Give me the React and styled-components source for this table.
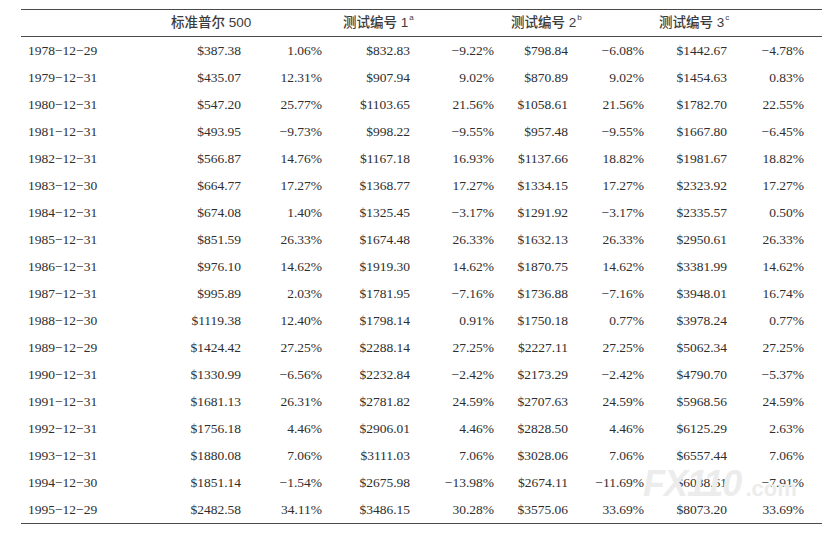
import React from "react";
import styled, { createGlobalStyle } from "styled-components";

const Global = createGlobalStyle`
  html, body { margin: 0; padding: 0; background: #fff; }
  body { width: 832px; height: 541px; overflow: hidden; }
`;

const COLS = "149px 71px 81px 88px 84px 74px 76px 83px 77px";

const Table = styled.div`
  position: relative;
  margin: 9px 0 0 21px;
  width: 801px;
  box-sizing: border-box;
  padding-right: 18px;
  border-top: 1px solid #4a4a4a;
  border-bottom: 1px solid #4a4a4a;
  font-family: "Liberation Serif", "Times New Roman", serif;
  color: #2e2e2e;
`;

const HeaderRow = styled.div`
  display: grid;
  grid-template-columns: ${COLS};
  height: 26px;
  align-items: center;
  border-bottom: 1px solid #4a4a4a;
  margin-right: -18px;
  padding-right: 18px;
`;

const HeadCell = styled.div`
  grid-column: ${(p) => p.$span};
  padding-left: ${(p) => p.$pad}px;
  font-family: "Liberation Sans", "Noto Sans CJK SC", sans-serif;
  font-size: 13.5px;
  font-weight: 500;
  color: #3c3c3c;
  white-space: nowrap;
  line-height: 1;
`;

const Sup = styled.sup`
  font-size: 8px;
  vertical-align: top;
  position: relative;
  top: -2px;
  margin-left: 1px;
`;

const Row = styled.div`
  display: grid;
  grid-template-columns: ${COLS};
  height: 27px;
  align-items: center;
  font-size: 13.5px;
`;

const DateCell = styled.div`
  padding-left: 7px;
  white-space: nowrap;
`;

const Num = styled.div`
  text-align: right;
  white-space: nowrap;
`;

const Watermark = styled.div`
  position: absolute;
  left: 622px;
  top: 456px;
  display: flex;
  align-items: baseline;
  gap: 4px;
  pointer-events: none;
  font-family: "Liberation Sans", sans-serif;
  color: #ececec;
`;

const WmBig = styled.span`
  font-size: 36px;
  font-weight: 700;
  font-style: italic;
  letter-spacing: -1px;
  line-height: 1;
`;

const WmSmall = styled.span`
  font-size: 22px;
  font-weight: 700;
  line-height: 1;
`;

const M = "\u2212";
const d = (s) => s.replace(/-/g, M);

const data = [
  ["1978-12-29", "$387.38", "1.06%", "$832.83", "-9.22%", "$798.84", "-6.08%", "$1442.67", "-4.78%"],
  ["1979-12-31", "$435.07", "12.31%", "$907.94", "9.02%", "$870.89", "9.02%", "$1454.63", "0.83%"],
  ["1980-12-31", "$547.20", "25.77%", "$1103.65", "21.56%", "$1058.61", "21.56%", "$1782.70", "22.55%"],
  ["1981-12-31", "$493.95", "-9.73%", "$998.22", "-9.55%", "$957.48", "-9.55%", "$1667.80", "-6.45%"],
  ["1982-12-31", "$566.87", "14.76%", "$1167.18", "16.93%", "$1137.66", "18.82%", "$1981.67", "18.82%"],
  ["1983-12-30", "$664.77", "17.27%", "$1368.77", "17.27%", "$1334.15", "17.27%", "$2323.92", "17.27%"],
  ["1984-12-31", "$674.08", "1.40%", "$1325.45", "-3.17%", "$1291.92", "-3.17%", "$2335.57", "0.50%"],
  ["1985-12-31", "$851.59", "26.33%", "$1674.48", "26.33%", "$1632.13", "26.33%", "$2950.61", "26.33%"],
  ["1986-12-31", "$976.10", "14.62%", "$1919.30", "14.62%", "$1870.75", "14.62%", "$3381.99", "14.62%"],
  ["1987-12-31", "$995.89", "2.03%", "$1781.95", "-7.16%", "$1736.88", "-7.16%", "$3948.01", "16.74%"],
  ["1988-12-30", "$1119.38", "12.40%", "$1798.14", "0.91%", "$1750.18", "0.77%", "$3978.24", "0.77%"],
  ["1989-12-29", "$1424.42", "27.25%", "$2288.14", "27.25%", "$2227.11", "27.25%", "$5062.34", "27.25%"],
  ["1990-12-31", "$1330.99", "-6.56%", "$2232.84", "-2.42%", "$2173.29", "-2.42%", "$4790.70", "-5.37%"],
  ["1991-12-31", "$1681.13", "26.31%", "$2781.82", "24.59%", "$2707.63", "24.59%", "$5968.56", "24.59%"],
  ["1992-12-31", "$1756.18", "4.46%", "$2906.01", "4.46%", "$2828.50", "4.46%", "$6125.29", "2.63%"],
  ["1993-12-31", "$1880.08", "7.06%", "$3111.03", "7.06%", "$3028.06", "7.06%", "$6557.44", "7.06%"],
  ["1994-12-30", "$1851.14", "-1.54%", "$2675.98", "-13.98%", "$2674.11", "-11.69%", "$6038.61", "-7.91%"],
  ["1995-12-29", "$2482.58", "34.11%", "$3486.15", "30.28%", "$3575.06", "33.69%", "$8073.20", "33.69%"],
];

const headers = [
  { span: "2 / 4", pad: 1, text: "标准普尔 500" },
  { span: "4 / 6", pad: 21, text: "测试编号 1", sup: "a" },
  { span: "6 / 8", pad: 17, text: "测试编号 2", sup: "b" },
  { span: "8 / 10", pad: 15, text: "测试编号 3", sup: "c" },
];

export default function App() {
  return (
    <>
      <Global />
      <Table>
        <HeaderRow>
          {headers.map((h) => (
            <HeadCell key={h.text} $span={h.span} $pad={h.pad}>
              {h.text}
              {h.sup && <Sup>{h.sup}</Sup>}
            </HeadCell>
          ))}
        </HeaderRow>
        {data.map((r) => (
          <Row key={r[0]}>
            <DateCell>{d(r[0])}</DateCell>
            {r.slice(1).map((v, i) => (
              <Num key={i}>{d(v)}</Num>
            ))}
          </Row>
        ))}
        <Watermark>
          <WmBig>FX110</WmBig>
          <WmSmall>.com</WmSmall>
        </Watermark>
      </Table>
    </>
  );
}
